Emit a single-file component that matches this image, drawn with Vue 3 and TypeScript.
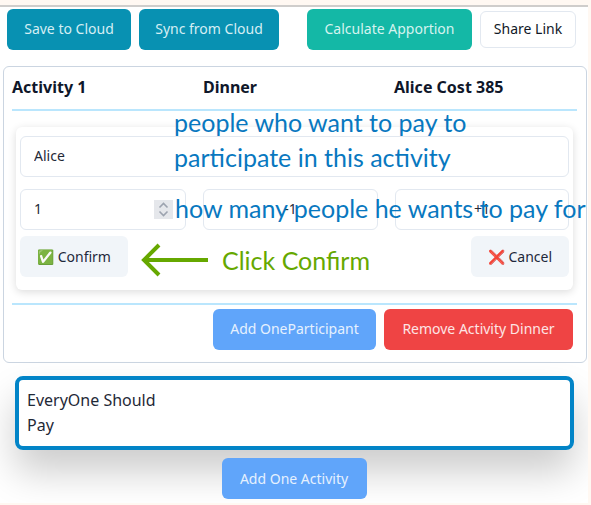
<script setup lang="ts">
import { ref } from 'vue'

// 分摊表单状态
const participantName = ref('Alice')
const participantCount = ref(1)
const activityNote = ref('EveryOne Should\nPay')
</script>

<template>
  <div class="page">
    <div class="top-strip"></div>

    <div class="toolbar">
      <button class="btn btn-cyan save-btn">Save to Cloud</button>
      <button class="btn btn-cyan sync-btn">Sync from Cloud</button>
      <button class="btn btn-teal calc-btn">Calculate Apportion</button>
      <button class="btn share-btn">Share Link</button>
    </div>

    <section class="activity-card">
      <header class="activity-header">
        <span>Activity 1</span>
        <span>Dinner</span>
        <span>Alice Cost 385</span>
      </header>

      <div class="participant-card">
        <input v-model="participantName" class="field" type="text" />
        <div class="count-row">
          <div class="count-wrap">
            <input v-model="participantCount" class="field count-input" type="number" />
            <svg class="spinner" width="19" height="19" viewBox="0 0 19 19">
              <path d="M5.5 7.5 9.5 3.5l4 4M5.5 11.5l4 4 4-4" fill="none" stroke="#9ca3af" stroke-width="1.6" />
            </svg>
          </div>
          <button class="field step-btn">-1</button>
          <button class="field step-btn">+1</button>
        </div>
        <div class="confirm-row">
          <button class="btn btn-soft confirm-btn">✅ Confirm</button>
          <button class="btn btn-soft cancel-btn">❌ Cancel</button>
        </div>
      </div>

      <footer class="activity-footer">
        <button class="btn btn-blue add-participant">Add OneParticipant</button>
        <button class="btn btn-red remove-activity">Remove Activity Dinner</button>
      </footer>
    </section>

    <div class="note-wrap">
      <textarea v-model="activityNote" class="note" rows="2"></textarea>
    </div>

    <div class="add-row">
      <button class="btn btn-blue add-activity">Add One Activity</button>
    </div>

    <!-- 教程标注 -->
    <div class="hint hint-people">people who want to pay to<br />participate in this activity</div>
    <div class="hint hint-count">how many people he wants to pay for</div>
    <svg class="hint-arrow" width="68" height="34" viewBox="0 0 68 34">
      <path d="M67 17H3M18 2 3 17l15 15" fill="none" stroke="#66a800" stroke-width="4" />
    </svg>
    <div class="hint hint-click">Click Confirm</div>
  </div>
</template>

<style scoped>
.page {
  position: relative;
  width: 588px;
  height: 503px;
  overflow: hidden;
  background: #fff;
  font-family: "Noto Sans", "Open Sans", sans-serif;
  color: #1f2937;
}

.top-strip {
  height: 5px;
  background: #fff8f2;
  border-bottom: 2px solid #cfcdcb;
}

.toolbar {
  display: flex;
  align-items: center;
  padding: 2px 0 0 7px;
  height: 41px;
}

.btn {
  height: 41px;
  border: none;
  border-radius: 6px;
  font-family: inherit;
  font-size: 14px;
  padding: 0 0 2px;
  cursor: pointer;
}

.btn-cyan {
  background: #0891b2;
  color: #d5eef4;
}

.btn-teal {
  background: #14b8a6;
  color: #d4f3ef;
}

.btn-blue {
  background: #60a5fa;
  color: #e6f1fe;
}

.btn-red {
  background: #ef4444;
  color: #fde4e4;
}

.btn-soft {
  background: #f1f5f9;
  color: #1e293b;
}

.save-btn {
  width: 124px;
}

.sync-btn {
  width: 140px;
  margin-left: 8px;
}

.calc-btn {
  width: 165px;
  margin-left: 28px;
}

.share-btn {
  width: 96px;
  height: 37px;
  margin-left: 8px;
  background: #fff;
  border: 1px solid #e2e8f0;
  color: #111827;
}

.activity-card {
  margin: 16px 0 0 3px;
  width: 584px;
  height: 297px;
  box-sizing: border-box;
  border: 1px solid #cbd5e1;
  border-radius: 6px;
  padding: 0 9px 0 8px;
  background: #fff;
}

.activity-header {
  display: grid;
  grid-template-columns: 191px 191px 1fr;
  height: 44px;
  align-items: center;
  padding-bottom: 2px;
  box-sizing: border-box;
  border-bottom: 2px solid #bae6fd;
  font-weight: 700;
  font-size: 16px;
  color: #0f172a;
}

.participant-card {
  margin: 16px 4px 0;
  height: 163px;
  box-sizing: border-box;
  padding: 9px 4px 0;
  border-radius: 6px;
  background: #fff;
  box-shadow: 0 2px 8px rgba(0, 0, 0, 0.14);
  display: flex;
  flex-direction: column;
}

.field {
  display: block;
  height: 41px;
  width: 100%;
  box-sizing: border-box;
  border: 1px solid #e2e8f0;
  border-radius: 6px;
  background: #fff;
  font-family: inherit;
  font-size: 14px;
  color: #1f2937;
  padding: 0 13px 2px;
}

.count-row {
  display: grid;
  grid-template-columns: 166px 175px 174px;
  column-gap: 17px;
  margin-top: 12px;
}

.count-wrap {
  position: relative;
}

.count-input {
  appearance: textfield;
}

.count-input::-webkit-inner-spin-button {
  display: none;
}

.spinner {
  position: absolute;
  left: 134px;
  top: 11px;
  background: #e5e7eb;
}

.step-btn {
  text-align: center;
}

.confirm-row {
  display: flex;
  justify-content: space-between;
  margin-top: 6px;
}

.confirm-btn {
  width: 108px;
  padding-bottom: 0;
}

.cancel-btn {
  width: 98px;
  padding-bottom: 0;
}

.activity-footer {
  display: flex;
  justify-content: flex-end;
  gap: 8px;
  margin-top: 13px;
  padding: 4px 4px 0 0;
  border-top: 2px solid #bae6fd;
}

.add-participant {
  width: 163px;
}

.remove-activity {
  width: 189px;
}

.note-wrap {
  margin: 13px 0 0 15px;
  width: 559px;
  border-radius: 8px;
  box-shadow: 0 22px 38px rgba(0, 0, 0, 0.2);
}

.note {
  display: block;
  width: 100%;
  height: 74px;
  box-sizing: border-box;
  border: 4px solid #0284c7;
  border-radius: 8px;
  outline: none;
  resize: none;
  padding: 8px;
  font-family: inherit;
  font-size: 16px;
  line-height: 25px;
  color: #1f2937;
  background: #fff;
}

.add-row {
  position: relative;
  display: flex;
  justify-content: center;
  margin-top: 8px;
}

.add-activity {
  width: 145px;
  padding-bottom: 0;
}

.hint {
  position: absolute;
  font-family: "Lato", sans-serif;
  font-size: 25px;
  line-height: 35px;
  color: #0878c0;
  white-space: nowrap;
}

.hint-people {
  left: 174px;
  top: 105px;
}

.hint-count {
  left: 175px;
  top: 191px;
}

.hint-click {
  left: 222px;
  top: 243px;
  color: #66a800;
}

.hint-arrow {
  position: absolute;
  left: 141px;
  top: 243px;
}
</style>

<style>
html,
body {
  background: #fff8f2;
}
</style>
